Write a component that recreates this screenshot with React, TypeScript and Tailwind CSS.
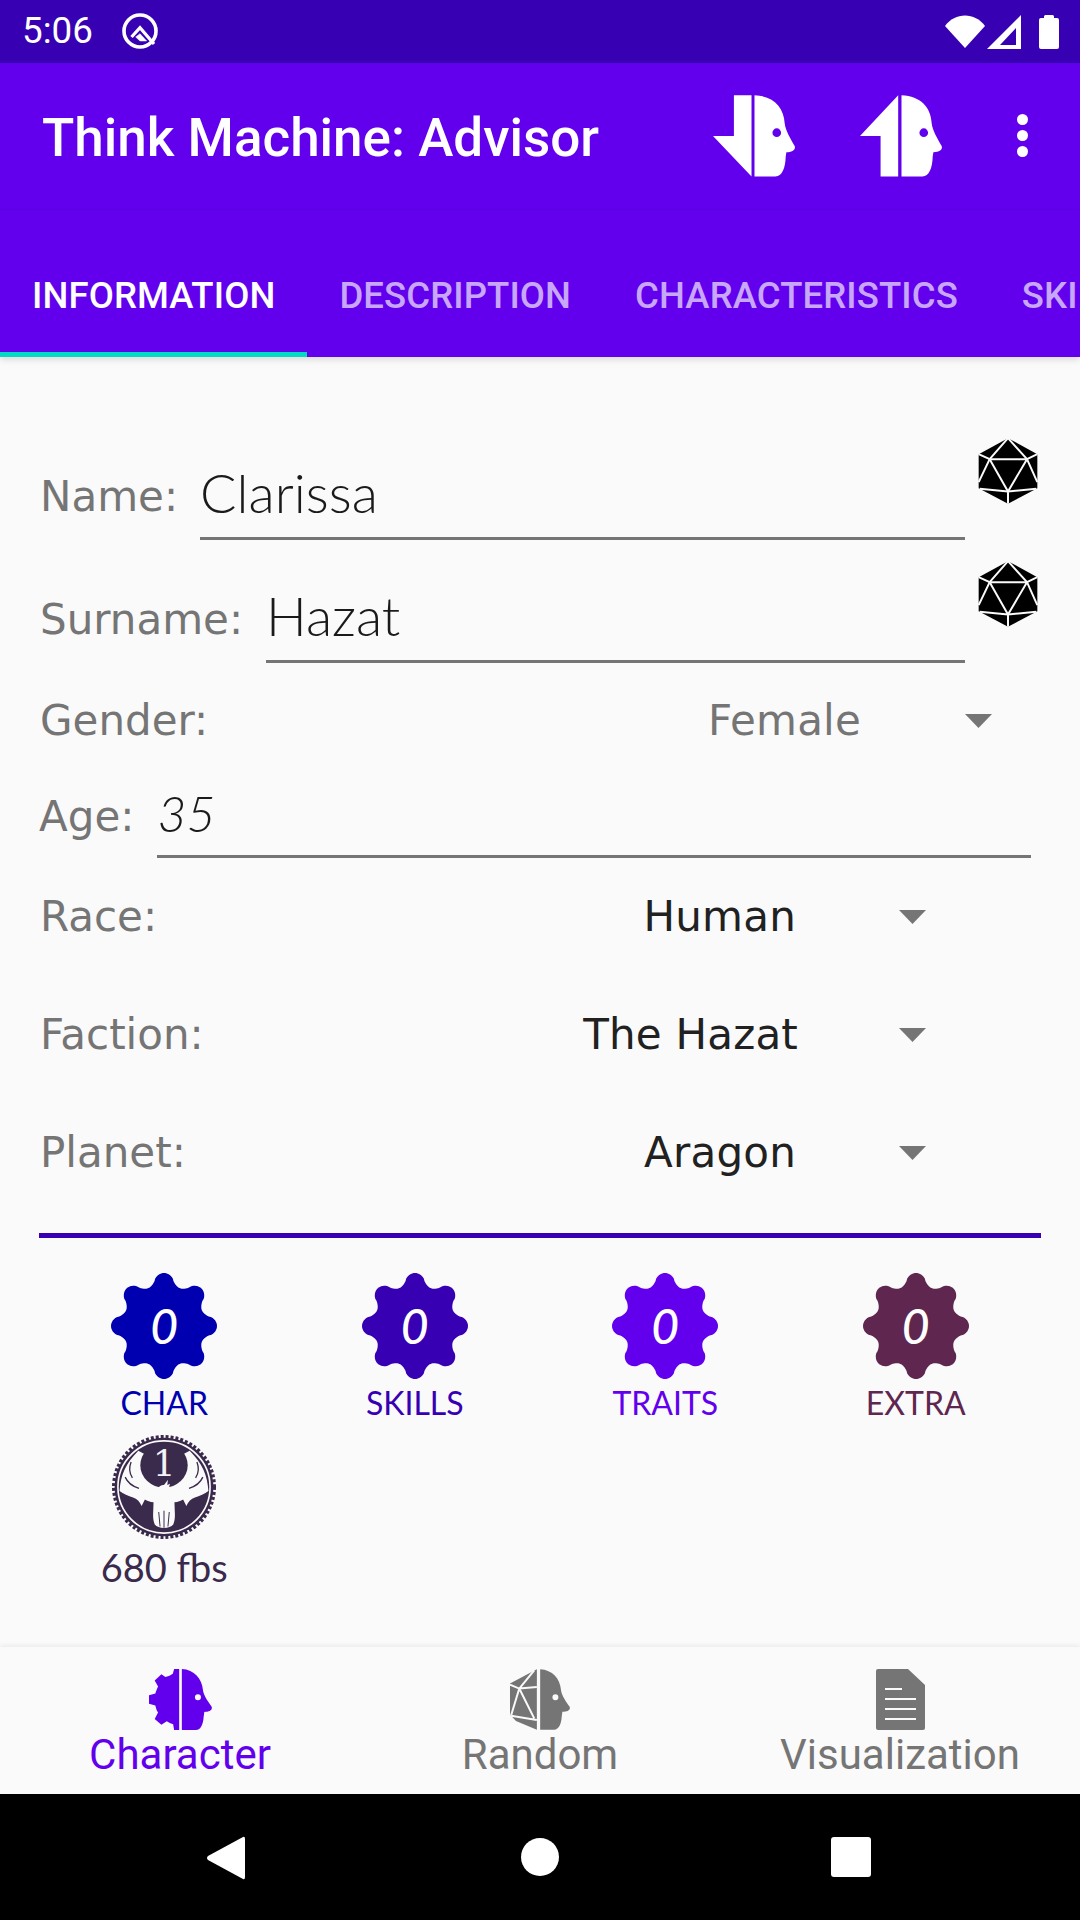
import React from "react";

const HEAD =
  "M153 42C190 44 213 70 216 105C218 122 232 140 242 155C245 165 235 170 220 170L218 185C217 205 210 224 195 224L153 224Z";

function gearPath(cx: number, cy: number, rIn: number, rOut: number, lobes: number) {
  const pts: string[] = [];
  const n = 240;
  for (let i = 0; i < n; i++) {
    const t = (i / n) * Math.PI * 2;
    const c = Math.cos(lobes * t);
    const s = Math.sign(c) * Math.pow(Math.abs(c), 0.7);
    const r = (rIn + rOut) / 2 + ((rOut - rIn) / 2) * s;
    pts.push(`${(cx + r * Math.sin(t)).toFixed(2)} ${(cy - r * Math.cos(t)).toFixed(2)}`);
  }
  return "M" + pts.join("L") + "Z";
}

function HeadArrowIcon({ up }: { up?: boolean }) {
  return (
    <svg viewBox="0 0 250 246" className="w-[83px] h-[82px] shrink-0" fill="#fff">
      {up ? (
        <path d="M115 0L0 123L62 123L62 245L115 245Z" />
      ) : (
        <path d="M63 0L116 0L116 245L0 123L63 123Z" />
      )}
      <path
        fillRule="evenodd"
        d="M125 0C183 3 213 35 216 85C218 105 233 130 246 153C250 165 238 171 221 172L219 185C218 220 208 245 188 245L125 245ZM192 100A12 12 0 1 0 192 126A12 12 0 1 0 192 100Z"
      />
    </svg>
  );
}

function D20() {
  return (
    <svg viewBox="115 55 180 197" className="w-[60px] h-[66px]">
      <polygon points="205,55 293,103 293,205 205,252 117,205 117,103" fill="#000" />
      <g stroke="#fafafa" strokeWidth="6" fill="none">
        <polygon points="150,118 262,118 205,215" />
        <path d="M205 55L150 118M205 55L262 118M117 103L150 118M293 103L262 118M117 187L150 118M293 187L262 118M120 207L205 215L290 207M205 215L205 252" />
      </g>
    </svg>
  );
}

function Arrow({ color }: { color: string }) {
  return (
    <svg viewBox="0 0 27 14" className="w-[27px] h-[14px] shrink-0" fill={color}>
      <path d="M0 0H27L13.5 14Z" />
    </svg>
  );
}

function Gear({ color, label }: { color: string; label: string }) {
  return (
    <div className="flex flex-col items-center">
      <div className="relative w-[106px] h-[106px]">
        <svg viewBox="0 0 106 106" className="w-[106px] h-[106px]">
          <path d={gearPath(53, 53, 41, 53, 8)} fill={color} />
        </svg>
        <span className="absolute inset-0 flex items-center justify-center text-white italic font-medium text-[48px] font-['Lato'] leading-none">
          0
        </span>
      </div>
      <span className="mt-[8px] text-[32px] leading-[32px] font-['Lato'] font-normal" style={{ color }}>
        {label}
      </span>
    </div>
  );
}

function Phoenix() {
  const dark = "#3a2a4c";
  const wing = (
    <g>
      <path
        fill="#fafafa"
        d="M33 180C36 132 52 96 90 58L168 100L168 222L142 214C128 216 118 210 110 206L100 226C94 212 86 204 74 200C60 196 44 188 33 180Z"
      />
      <path d="M68 92C60 112 64 128 72 140M50 138C58 156 72 166 92 172" fill="none" stroke={dark} strokeWidth="4" />
    </g>
  );
  return (
    <div className="relative w-[104px] h-[104px]">
      <svg viewBox="10 10 316 316" className="w-[104px] h-[104px]">
        <circle cx="168" cy="168" r="150" fill={dark} />
        <circle cx="168" cy="168" r="152" fill="none" stroke={dark} strokeWidth="12" strokeDasharray="9 6" />
        <circle cx="168" cy="168" r="140" fill="none" stroke="#fafafa" strokeWidth="5" />
        {wing}
        <g transform="matrix(-1 0 0 1 336 0)">{wing}</g>
        <ellipse cx="168" cy="102" rx="72" ry="68" fill={dark} />
        <path
          fill="#fafafa"
          d="M146 178C148 168 160 162 168 162L180 146L178 162L186 158L182 176C186 186 190 192 200 200C198 230 206 260 196 282C186 296 150 296 140 282C130 260 138 230 136 200C144 192 146 186 146 178Z"
        />
        <path d="M152 244L156 288M168 240L168 292M184 244L180 288" fill="none" stroke={dark} strokeWidth="3" />
      </svg>
      <span className="absolute left-0 right-0 top-[11px] text-center text-[#f4f2f6] text-[36px] leading-[36px] font-['DejaVu_Serif']">
        1
      </span>
    </div>
  );
}

function Field({ label, value, ml }: { label: string; value: string; ml: string }) {
  return (
    <div className="flex items-end h-[102px] pl-[40px]">
      <span className="text-[42px] leading-[42px] text-[#757575] font-['DejaVu_Sans'] mb-[22px] shrink-0">{label}</span>
      <div className={`${ml} flex-1 h-[80px] border-b-[3px] border-[#757575] flex items-center pb-[12px]`}>
        <span className="text-[54px] leading-[54px] text-[#1a1a1a] font-['Lato'] font-light">{value}</span>
      </div>
      <div className="self-start w-[115px] pl-[13px] shrink-0">
        <D20 />
      </div>
    </div>
  );
}

function Spinner({ label, value, muted, h, pr, gap }: { label: string; value: string; muted?: boolean; h: string; pr: string; gap: string }) {
  return (
    <div className={`flex items-center pl-[40px] ${h} ${pr}`}>
      <span className="text-[42px] leading-[42px] text-[#757575] font-['DejaVu_Sans']">{label}</span>
      <span
        className={`ml-auto text-[42px] leading-[42px] tracking-[0.2px] font-['DejaVu_Sans'] ${muted ? "text-[#757575]" : "text-[#212121]"}`}
      >
        {value}
      </span>
      <div className={gap}>
        <Arrow color="#757575" />
      </div>
    </div>
  );
}

function NavItem({ label, color, children }: { label: string; color: string; children: React.ReactNode }) {
  return (
    <div className="flex-1 flex flex-col items-center pt-[22px]">
      <div className="h-[61px] flex items-center justify-center">{children}</div>
      <span className="mt-[2px] text-[42px] leading-[46px] font-['Roboto']" style={{ color }}>
        {label}
      </span>
    </div>
  );
}

export default function App() {
  return (
    <div className="w-[1080px] h-[1920px] flex flex-col bg-[#fafafa] overflow-hidden font-['Roboto']">
      {/* status bar */}
      <div className="h-[63px] bg-[#3700b3] flex items-center text-white pl-[22px] pr-[21px] shrink-0">
        <span className="text-[36.75px] leading-none w-[99px]">5:06</span>
        <svg viewBox="0 0 38 38" className="w-[38px] h-[38px] -mt-[1px]" fill="none" stroke="#fff">
          <circle cx="19" cy="19" r="16" strokeWidth="3.6" />
          <path d="M10.5 25L19 15.7L33 32" strokeWidth="3.2" />
          <path d="M14.7 25L19 21.7L25.7 29L19 29Z" fill="#fff" strokeWidth="0.5" />
        </svg>
        <div className="ml-auto flex items-center">
          <svg viewBox="0 0 40 33" className="w-[40px] h-[33px]" fill="#fff">
            <path d="M0 11C10 -3 30 -3 40 11L20 33Z" />
          </svg>
          <svg viewBox="0 0 34 34" className="w-[34px] h-[34px] ml-[2px]" fill="#fff" fillRule="evenodd">
            <path d="M34 0V34H0ZM29 13L13 30H29Z" />
          </svg>
          <svg viewBox="0 0 20 34" className="w-[20px] h-[34px] ml-[18px]" fill="#fff">
            <path d="M5 3V1.5Q5 0 6.5 0H13.5Q15 0 15 1.5V3H18Q20 3 20 5V32Q20 34 18 34H2Q0 34 0 32V5Q0 3 2 3Z" />
          </svg>
        </div>
      </div>

      {/* app bar */}
      <div className="h-[147px] bg-[#6200ee] flex items-center pl-[42px] shrink-0 border-b border-[#5e00e6]">
        <span className="text-[53px] leading-none font-medium text-white mt-[5px]">Think Machine: Advisor</span>
        <div className="ml-auto flex items-center pr-[49px] -mt-[1px]">
          <HeadArrowIcon />
          <div className="w-[64px]" />
          <HeadArrowIcon up />
          <div className="w-[88px] flex flex-col items-center gap-[5px] pl-[71px]">
            <span className="w-[11px] h-[11px] rounded-full bg-white shrink-0" />
            <span className="w-[11px] h-[11px] rounded-full bg-white shrink-0" />
            <span className="w-[11px] h-[11px] rounded-full bg-white shrink-0" />
          </div>
        </div>
      </div>

      {/* tabs */}
      <div className="h-[147px] bg-[#6200ee] pt-[21px] flex overflow-hidden shrink-0 shadow-[0_3px_6px_rgba(0,0,0,0.12)] relative">
        {[
          ["INFORMATION", true],
          ["DESCRIPTION", false],
          ["CHARACTERISTICS", false],
          ["SKILLS", false],
        ].map(([t, active]) => (
          <div
            key={t as string}
            className={`h-[126px] px-[32px] flex items-center shrink-0 border-b-[5px] pt-[10px] ${active ? "border-[#03dac5]" : "border-transparent"}`}
          >
            <span className={`text-[36.5px] leading-none font-medium tracking-[0.1px] ${active ? "text-white" : "text-[#c8a6f9]"}`}>
              {t as string}
            </span>
          </div>
        ))}
      </div>

      {/* form */}
      <div className="flex-1 flex flex-col pt-[81px]">
        <Field label="Name:" value="Clarissa" ml="ml-[22px]" />
        <div className="h-[21px]" />
        <Field label="Surname:" value="Hazat" ml="ml-[23px]" />
        <Spinner label="Gender:" value="Female" muted h="h-[116px]" pr="pr-[88px]" gap="ml-[104px]" />
        <div className="flex items-end h-[83px] pl-[40px] pr-[49px] -mt-[4px]">
          <span className="text-[42px] leading-[42px] text-[#757575] font-['DejaVu_Sans'] mb-[20px] -ml-[1px] shrink-0">Age:</span>
          <div className="ml-[23px] flex-1 h-[83px] border-b-[3px] border-[#757575] flex items-center pb-[4px]">
            <span className="text-[50px] leading-[50px] text-[#1a1a1a] font-['Lato'] font-light italic">35</span>
          </div>
        </div>
        <Spinner label="Race:" value="Human" h="h-[118px]" pr="pr-[154px]" gap="ml-[103px]" />
        <Spinner label="Faction:" value="The Hazat" h="h-[118px]" pr="pr-[154px]" gap="ml-[101px]" />
        <Spinner label="Planet:" value="Aragon" h="h-[118px]" pr="pr-[154px]" gap="ml-[103px]" />
        <div className="h-[5px] bg-[#3700b3] mx-[39px] mt-[21px] shrink-0" />
        <div className="grid grid-cols-4 mx-[39px] mt-[35px]">
          <Gear color="#0000b0" label="CHAR" />
          <Gear color="#3700b3" label="SKILLS" />
          <Gear color="#6200ee" label="TRAITS" />
          <Gear color="#5f2750" label="EXTRA" />
          <div className="flex flex-col items-center mt-[16px]">
            <Phoenix />
            <span className="mt-[9px] text-[38px] leading-[38px] font-['Lato'] font-normal text-[#3a2a4c]">680 fbs</span>
          </div>
        </div>
      </div>

      {/* bottom nav */}
      <div className="h-[147px] bg-[#fafafa] flex shrink-0 shadow-[0_-2px_4px_rgba(0,0,0,0.06)] relative">
        <NavItem label="Character" color="#6200ee">
          <svg viewBox="55 42 188 182" className="w-[63px] h-[61px]" fill="#6200ee">
            <path fillRule="evenodd" d={HEAD + "M201 117A9 9 0 1 0 201 135A9 9 0 1 0 201 117Z"} />
            <path d="M145 42L130 42L126 56C118 62 110 64 104 66L92 58L72 76L82 94C78 102 76 108 74 115L55 120L55 146L74 151C76 160 78 166 82 172L72 191L92 208L108 198C114 202 120 205 127 207L130 224L145 224Z" />
          </svg>
        </NavItem>
        <NavItem label="Random" color="#757575">
          <svg viewBox="62 42 181 182" className="w-[60px] h-[61px]" fill="#757575">
            <path fillRule="evenodd" d={HEAD + "M199 117A9 9 0 1 0 199 135A9 9 0 1 0 199 117Z"} />
            <polygon points="143,42 62,85 62,178 80,198 143,224" />
            <path
              d="M135 45L90 100M62 88L90 100L143 95M90 100L135 190M90 100L65 182M65 182L143 195"
              stroke="#fafafa"
              strokeWidth="6"
              fill="none"
            />
          </svg>
        </NavItem>
        <NavItem label="Visualization" color="#757575">
          <svg viewBox="0 0 49 61" className="w-[49px] h-[61px]" fill="#757575">
            <path d="M2 0H32L49 16V59Q49 61 47 61H2Q0 61 0 59V2Q0 0 2 0Z" />
            <path d="M9 19H26V21H9ZM9 29H40V31H9ZM9 39H40V41H9ZM9 49H40V51H9Z" fill="#fafafa" />
          </svg>
        </NavItem>
      </div>

      {/* system nav */}
      <div className="h-[126px] bg-black flex items-start shrink-0 pl-[207px]">
        <svg viewBox="0 0 38 44" className="w-[38px] h-[44px] mt-[42px] shrink-0" fill="#fff">
          <path d="M36 1Q38 0 38 3V41Q38 44 36 43L1 24Q-1 22 1 20Z" />
        </svg>
        <span className="w-[38px] h-[38px] rounded-full bg-white mt-[44px] ml-[276px] shrink-0" />
        <span className="w-[40px] h-[40px] rounded-[3px] bg-white mt-[43px] ml-[272px] shrink-0" />
      </div>
    </div>
  );
}
